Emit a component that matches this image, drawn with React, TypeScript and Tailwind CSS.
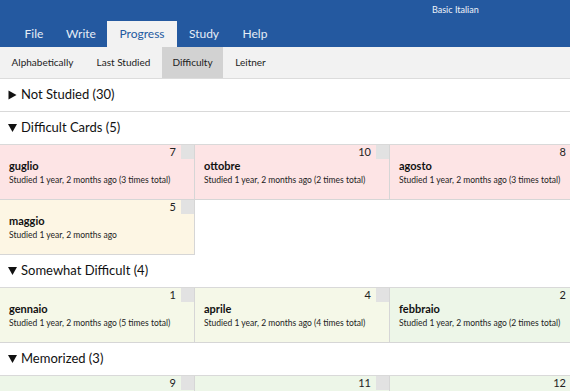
import React from "react";

type Card = { n: number; word: string; sub: string; bg: string };

const tabs = [
  { label: "File", w: "w-[42px]" },
  { label: "Write", w: "w-[52px]" },
  { label: "Progress", w: "w-[70px]", active: true },
  { label: "Study", w: "w-[54px]" },
  { label: "Help", w: "w-[48px]" },
];

const subTabs = [
  { label: "Alphabetically", w: "w-[85px]" },
  { label: "Last Studied", w: "w-[77px]" },
  { label: "Difficulty", w: "w-[61px]", active: true },
  { label: "Leitner", w: "w-[55px]" },
];

const PINK = "bg-[#fde4e5]";
const CREAM = "bg-[#fdf6e4]";
const YG = "bg-[#f5f8e8]";
const GREEN = "bg-[#edf6e8]";

const difficult: Card[] = [
  { n: 7, word: "guglio", sub: "Studied 1 year, 2 months ago (3 times total)", bg: PINK },
  { n: 10, word: "ottobre", sub: "Studied 1 year, 2 months ago (2 times total)", bg: PINK },
  { n: 8, word: "agosto", sub: "Studied 1 year, 2 months ago (3 times total)", bg: PINK },
  { n: 5, word: "maggio", sub: "Studied 1 year, 2 months ago", bg: CREAM },
];

const somewhat: Card[] = [
  { n: 1, word: "gennaio", sub: "Studied 1 year, 2 months ago (5 times total)", bg: YG },
  { n: 4, word: "aprile", sub: "Studied 1 year, 2 months ago (4 times total)", bg: YG },
  { n: 2, word: "febbraio", sub: "Studied 1 year, 2 months ago (2 times total)", bg: GREEN },
];

const memorized: Card[] = [
  { n: 9, word: "", sub: "", bg: GREEN },
  { n: 11, word: "", sub: "", bg: GREEN },
  { n: 12, word: "", sub: "", bg: GREEN },
];

function CardView({ c }: { c: Card }) {
  return (
    <div className={`relative w-[195px] h-[55px] border-r border-b border-[#d6d6d6] ${c.bg}`}>
      <div className="absolute top-0 right-0 w-[13px] h-[14px] bg-[#e2e2e2]" />
      <div className="h-[14px] pr-[18px] text-right text-[11px] leading-[14px] text-[#222]">{c.n}</div>
      <div className="h-[14px] pl-[9px] text-[11px] leading-[14px] font-bold text-[#111]">{c.word}</div>
      <div className="h-[14px] pl-[9px] text-[8.5px] leading-[14px] text-[#222] whitespace-nowrap">{c.sub}</div>
    </div>
  );
}

function Tri({ open }: { open: boolean }) {
  return (
    <svg width="13" height="10" viewBox="0 0 13 10" className="shrink-0">
      {open ? <polygon points="0,1 9,1 4.5,9" fill="#111" /> : <polygon points="0.5,0.5 8.5,5 0.5,9.5" fill="#111" />}
    </svg>
  );
}

function Section({ title, open, cards }: { title: string; open: boolean; cards?: Card[] }) {
  return (
    <div>
      <div className="h-[33px] flex items-center border-b border-[#d9d9d9] pl-[8px] text-[13px] text-[#111]">
        <Tri open={open} />
        <span>{title}</span>
      </div>
      {cards && (
        <div className="flex flex-wrap w-[585px]">
          {cards.map((c) => (
            <CardView key={c.n} c={c} />
          ))}
        </div>
      )}
    </div>
  );
}

export default function App() {
  return (
    <div
      className="w-[570px] h-[391px] overflow-hidden bg-white"
      style={{ fontFamily: 'Lato, "Open Sans", sans-serif' }}
    >
      <div className="h-[47px] bg-[#2459a0] flex flex-col">
        <div className="h-[21px] pl-[432px] text-[9px] leading-[21px] text-[#eef3fa] -translate-y-[1px]">Basic Italian</div>
        <div className="h-[26px] flex pl-[13px]">
          {tabs.map((t) => (
            <div
              key={t.label}
              className={`${t.w} h-[26px] flex items-center justify-center text-[12px] ${
                t.active ? "bg-[#f2f2f2] text-[#2459a0]" : "text-[#e6edf6]"
              }`}
            >
              {t.label}
            </div>
          ))}
        </div>
      </div>
      <div className="h-[32px] bg-[#f2f2f2] border-b border-[#dcdcdc] flex">
        {subTabs.map((t) => (
          <div
            key={t.label}
            className={`${t.w} h-[31px] flex items-center justify-center text-[10px] text-[#222] ${
              t.active ? "bg-[#d2d2d2]" : ""
            }`}
          >
            {t.label}
          </div>
        ))}
      </div>
      <Section title="Not Studied (30)" open={false} />
      <Section title="Difficult Cards (5)" open cards={difficult} />
      <Section title="Somewhat Difficult (4)" open cards={somewhat} />
      <Section title="Memorized (3)" open cards={memorized} />
    </div>
  );
}
